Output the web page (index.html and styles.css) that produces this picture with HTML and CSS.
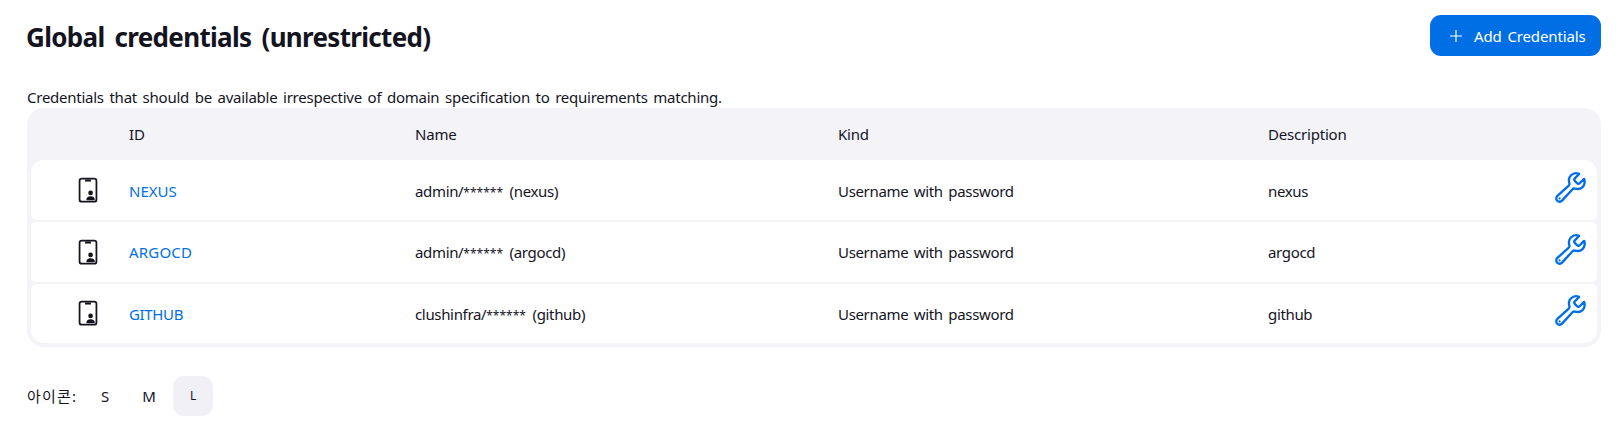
FILE: index.html
```html
<!DOCTYPE html>
<html lang="ko">
<head>
<meta charset="utf-8">
<title>Global credentials (unrestricted)</title>
<link rel="stylesheet" href="styles.css">
</head>
<body>
<svg class="defs" aria-hidden="true">
  <symbol id="credential" viewBox="0 0 512 512">
    <rect x="112" y="60" width="288" height="396" rx="40" fill="none" stroke="currentColor" stroke-width="30"/>
    <path d="M206 94h100" stroke="currentColor" stroke-width="36"/>
    <circle cx="300" cy="306" r="40" fill="currentColor"/>
    <path d="M300 362c-48 0-72 24-72 56 0 8 6 12 12 12h120c6 0 12-4 12-12 0-32-24-56-72-56z" fill="currentColor"/>
  </symbol>
  <symbol id="wrench" viewBox="0 0 512 512">
    <path d="M393.87 190a32.1 32.1 0 01-45.25 0l-26.57-26.57a32.09 32.09 0 010-45.26L382.19 58a1 1 0 00-.3-1.64c-38.82-16.64-89.15-8.16-121.11 23.57-30.58 30.35-32.32 76-21.12 115.84a31.93 31.93 0 01-9.06 32.08L64 380a48.17 48.17 0 1068 68l153.86-167a31.93 31.93 0 0131.6-9.13c39.54 10.59 84.54 8.6 114.72-21.19 32.49-32 39.5-88.56 23.75-120.93a1 1 0 00-1.6-.26z" fill="none" stroke="currentColor" stroke-width="34" stroke-linecap="round" stroke-linejoin="round"/>
    <circle cx="96" cy="416" r="16" fill="currentColor"/>
  </symbol>
</svg>
<header class="app-bar">
  <h1 class="title">Global credentials (unrestricted)</h1>
  <a class="button"><svg class="plus" viewBox="0 0 12 12"><path d="M6 0v12M0 6h12" stroke="currentColor" stroke-width="1.2"/></svg><span class="button-label">Add Credentials</span></a>
</header>
<p class="intro">Credentials that should be available irrespective of domain specification to requirements matching.</p>
<main class="table">
  <div class="row head"><span></span><span>ID</span><span>Name</span><span>Kind</span><span>Description</span><span></span></div>
  <div class="row"><svg class="credential"><use href="#credential"/></svg><a class="link nexus">NEXUS</a><span>admin/<span class="mask">******</span> (nexus)</span><span>Username with password</span><span>nexus</span><svg class="wrench"><use href="#wrench"/></svg></div>
  <div class="row"><svg class="credential"><use href="#credential"/></svg><a class="link argocd">ARGOCD</a><span>admin/<span class="mask">******</span> (argocd)</span><span>Username with password</span><span>argocd</span><svg class="wrench"><use href="#wrench"/></svg></div>
  <div class="row"><svg class="credential"><use href="#credential"/></svg><a class="link github">GITHUB</a><span>clushinfra/<span class="mask">******</span> (github)</span><span>Username with password</span><span>github</span><svg class="wrench"><use href="#wrench"/></svg></div>
</main>
<footer class="sizes"><span class="label">아이콘:</span><span class="size">S</span><span class="size">M</span><span class="size selected">L</span></footer>
</body>
</html>
```
FILE: styles.css
```css
* { box-sizing: border-box; }
body {
  margin: 0;
  padding: 15px 21px 0 27px;
  background: #fff;
  color: #14141f;
  font: 15px/24px "Noto Sans", "Noto Sans CJK KR", sans-serif;
  letter-spacing: -0.34px;
  word-spacing: 2px;
  white-space: nowrap;
}
.defs { display: none; }
.app-bar { display: flex; justify-content: space-between; height: 41px; }
.title {
  margin: 2px 0 0 -1px;
  font-size: 26px;
  line-height: 41px;
  font-weight: 700;
  letter-spacing: -0.68px;
  word-spacing: 4px;
}
.button {
  display: flex;
  align-items: center;
  width: 171px;
  height: 41px;
  padding-left: 20px;
  gap: 12px;
  border-radius: 11px;
  background: #006fe6;
  color: #fff;
  letter-spacing: -0.13px;
}
.plus { width: 12px; height: 12px; }
.intro { height: 24px; margin: 29px 0 -1px; letter-spacing: -0.25px; }
.table {
  display: flex;
  flex-direction: column;
  gap: 2px;
  height: 239px;
  padding: 0 4px 4px;
  border-radius: 17px;
  background: #f3f3f8;
}
.row {
  display: grid;
  grid-template-columns: 98px 286px 423px 430px 285px 33px;
  align-items: center;
  height: 60px;
  padding-top: 0;
  border-radius: 5px;
  background: #fff;
}
.head { height: 50px; padding-top: 2px; background: none; letter-spacing: -0.2px; }
.head + .row { padding-top: 1px; border-radius: 13px 13px 5px 5px; }
.row:last-child { height: 59px; border-radius: 5px 5px 13px 13px; }
.credential { width: 30px; height: 30px; margin: -1px 0 0 42px; color: #14141f; }
.wrench { width: 35px; height: 35px; margin: -6px 0 0; color: #006fe6; }
.mask { margin-right: 1px; font-size: 12px; line-height: 1; letter-spacing: 0; }
.link { color: #006fe6; }
.nexus { letter-spacing: 0; }
.argocd { letter-spacing: 0.2px; }
.github { letter-spacing: -0.35px; }
.sizes { display: flex; align-items: center; height: 40px; margin-top: 29px; }
.label { width: 58px; letter-spacing: 1.2px; }
.size { width: 40px; margin-right: 4px; line-height: 40px; text-align: center; border-radius: 11px; }
.size.selected { background: #f1f0f7; font-size: 12px; }
```
